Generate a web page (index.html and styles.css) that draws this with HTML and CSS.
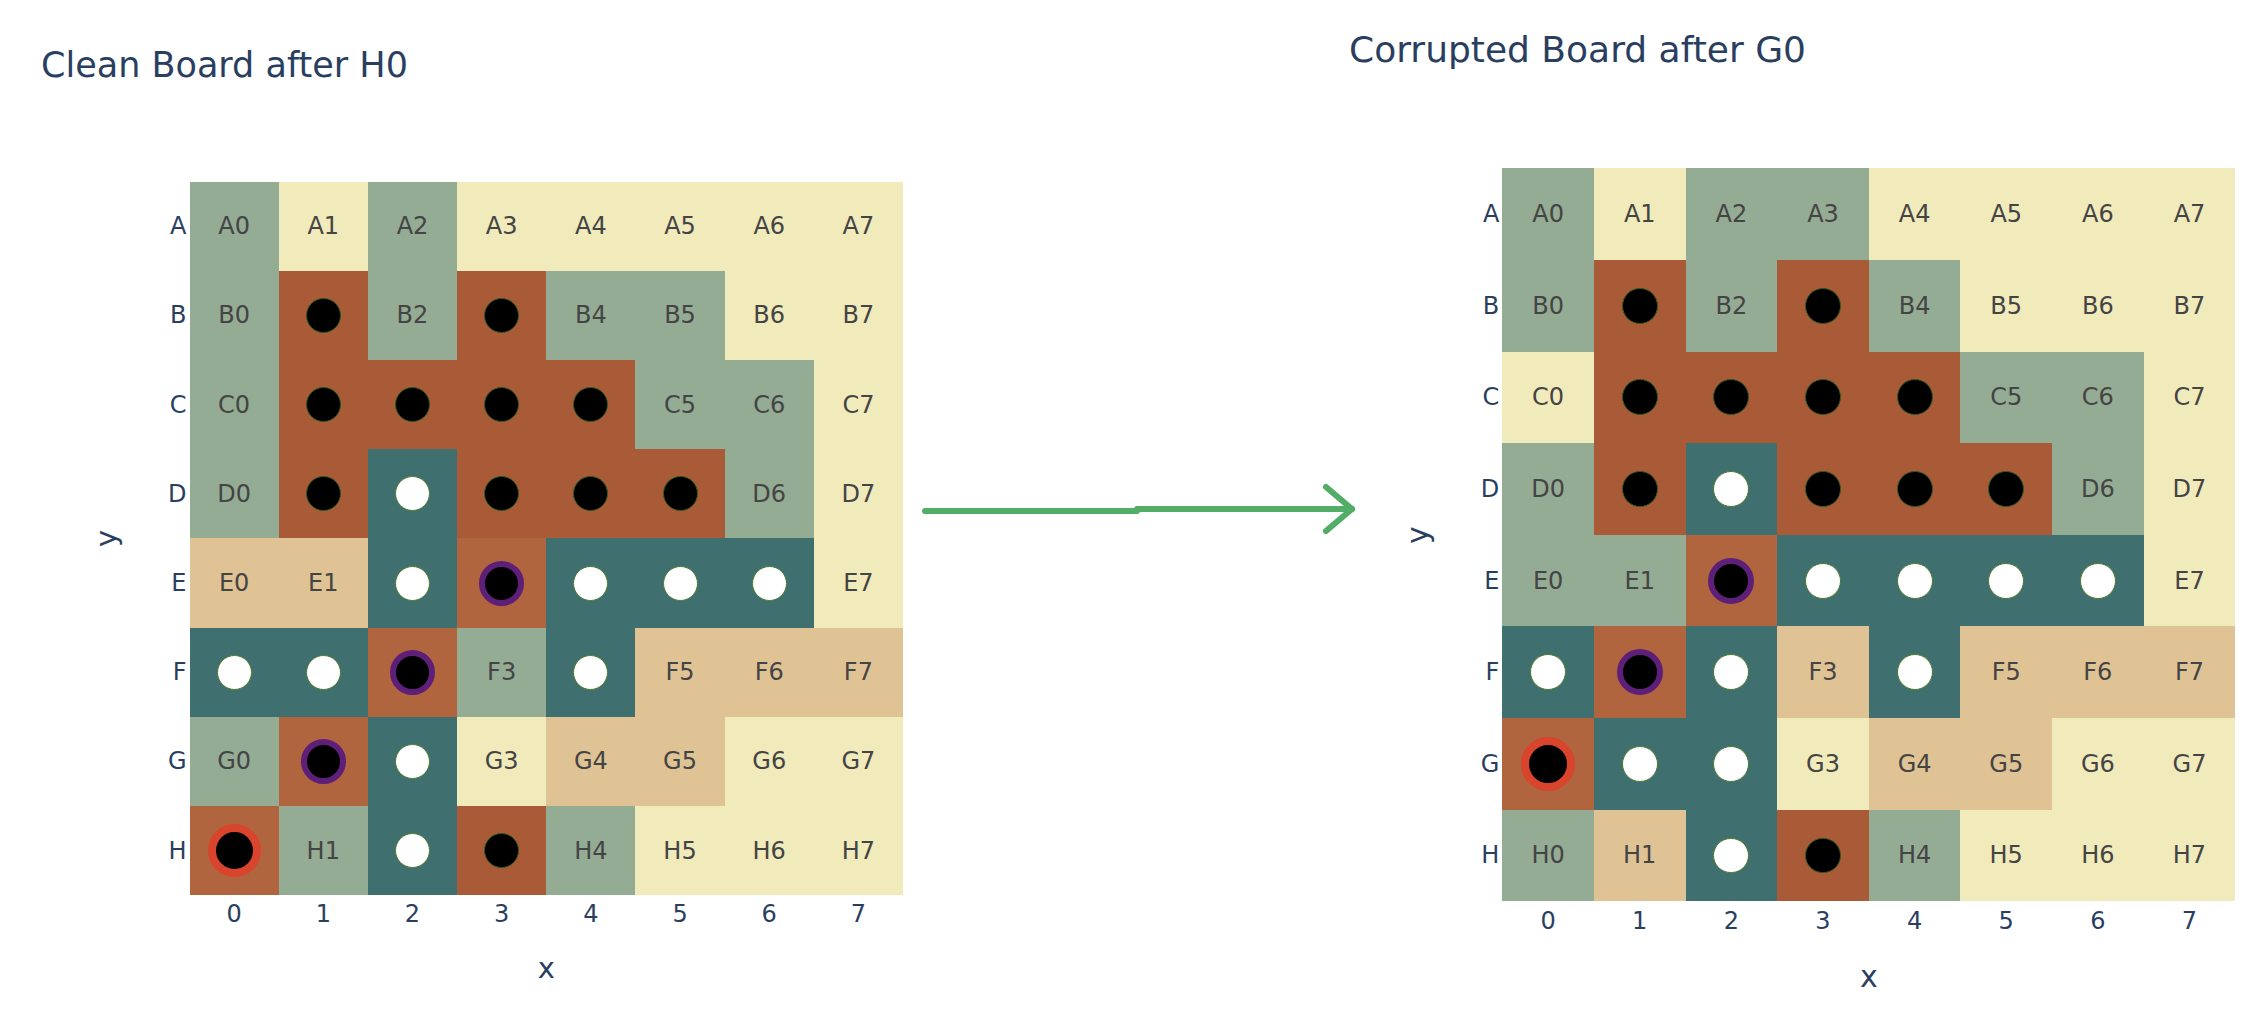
FILE: index.html
```html
<!DOCTYPE html>
<html>
<head>
<meta charset="utf-8">
<link rel="stylesheet" href="styles.css">
</head>
<body>
<div class="page">
  <section class="fig fig-left">
    <h2 class="title">Clean Board after H0</h2>
    <div class="plot">
      <div class="ylab"><span>y</span></div>
      <div class="yticks"><span>A</span><span>B</span><span>C</span><span>D</span><span>E</span><span>F</span><span>G</span><span>H</span></div>
      <div class="board">
        <div class="c s">A0</div><div class="c cr">A1</div><div class="c s">A2</div><div class="c cr">A3</div><div class="c cr">A4</div><div class="c cr">A5</div><div class="c cr">A6</div><div class="c cr">A7</div>
        <div class="c s">B0</div><div class="c r"><i class="dot dk"></i></div><div class="c s">B2</div><div class="c r"><i class="dot dk"></i></div><div class="c s">B4</div><div class="c s">B5</div><div class="c cr">B6</div><div class="c cr">B7</div>
        <div class="c s">C0</div><div class="c r"><i class="dot dk"></i></div><div class="c r"><i class="dot dk"></i></div><div class="c r"><i class="dot dk"></i></div><div class="c r"><i class="dot dk"></i></div><div class="c s">C5</div><div class="c s">C6</div><div class="c cr">C7</div>
        <div class="c s">D0</div><div class="c r"><i class="dot dk"></i></div><div class="c t"><i class="dot wh"></i></div><div class="c r"><i class="dot dk"></i></div><div class="c r"><i class="dot dk"></i></div><div class="c r"><i class="dot dk"></i></div><div class="c s">D6</div><div class="c cr">D7</div>
        <div class="c n">E0</div><div class="c n">E1</div><div class="c t"><i class="dot wh"></i></div><div class="c rl"><i class="dot pu"></i></div><div class="c t"><i class="dot wh"></i></div><div class="c t"><i class="dot wh"></i></div><div class="c t"><i class="dot wh"></i></div><div class="c cr">E7</div>
        <div class="c t"><i class="dot wh"></i></div><div class="c t"><i class="dot wh"></i></div><div class="c rl"><i class="dot pu"></i></div><div class="c s">F3</div><div class="c t"><i class="dot wh"></i></div><div class="c n">F5</div><div class="c n">F6</div><div class="c n">F7</div>
        <div class="c s">G0</div><div class="c rl"><i class="dot pu"></i></div><div class="c t"><i class="dot wh"></i></div><div class="c cr">G3</div><div class="c n">G4</div><div class="c n">G5</div><div class="c cr">G6</div><div class="c cr">G7</div>
        <div class="c rl"><i class="dot rd"></i></div><div class="c s">H1</div><div class="c t"><i class="dot wh"></i></div><div class="c r"><i class="dot dk"></i></div><div class="c s">H4</div><div class="c cr">H5</div><div class="c cr">H6</div><div class="c cr">H7</div>
      </div>
      <div class="xticks"><span>0</span><span>1</span><span>2</span><span>3</span><span>4</span><span>5</span><span>6</span><span>7</span></div>
      <div class="xlab">x</div>
    </div>
  </section>

  <div class="arrow">
    <svg width="440" height="60" viewBox="0 0 440 60">
      <g fill="none" stroke="#52ad67" stroke-width="6" stroke-linecap="round" stroke-linejoin="round">
        <line x1="5" y1="31" x2="217" y2="31"/>
        <line x1="217" y1="29" x2="432" y2="29"/>
        <polyline points="406,7 432,29 406,51"/>
      </g>
    </svg>
  </div>

  <section class="fig fig-right">
    <h2 class="title">Corrupted Board after G0</h2>
    <div class="plot">
      <div class="ylab"><span>y</span></div>
      <div class="yticks"><span>A</span><span>B</span><span>C</span><span>D</span><span>E</span><span>F</span><span>G</span><span>H</span></div>
      <div class="board">
        <div class="c s">A0</div><div class="c cr">A1</div><div class="c s">A2</div><div class="c s">A3</div><div class="c cr">A4</div><div class="c cr">A5</div><div class="c cr">A6</div><div class="c cr">A7</div>
        <div class="c s">B0</div><div class="c r"><i class="dot dk"></i></div><div class="c s">B2</div><div class="c r"><i class="dot dk"></i></div><div class="c s">B4</div><div class="c cr">B5</div><div class="c cr">B6</div><div class="c cr">B7</div>
        <div class="c cr">C0</div><div class="c r"><i class="dot dk"></i></div><div class="c r"><i class="dot dk"></i></div><div class="c r"><i class="dot dk"></i></div><div class="c r"><i class="dot dk"></i></div><div class="c s">C5</div><div class="c s">C6</div><div class="c cr">C7</div>
        <div class="c s">D0</div><div class="c r"><i class="dot dk"></i></div><div class="c t"><i class="dot wh"></i></div><div class="c r"><i class="dot dk"></i></div><div class="c r"><i class="dot dk"></i></div><div class="c r"><i class="dot dk"></i></div><div class="c s">D6</div><div class="c cr">D7</div>
        <div class="c s">E0</div><div class="c s">E1</div><div class="c rl"><i class="dot pu"></i></div><div class="c t"><i class="dot wh"></i></div><div class="c t"><i class="dot wh"></i></div><div class="c t"><i class="dot wh"></i></div><div class="c t"><i class="dot wh"></i></div><div class="c cr">E7</div>
        <div class="c t"><i class="dot wh"></i></div><div class="c rl"><i class="dot pu"></i></div><div class="c t"><i class="dot wh"></i></div><div class="c n">F3</div><div class="c t"><i class="dot wh"></i></div><div class="c n">F5</div><div class="c n">F6</div><div class="c n">F7</div>
        <div class="c rl"><i class="dot rd"></i></div><div class="c t"><i class="dot wh"></i></div><div class="c t"><i class="dot wh"></i></div><div class="c cr">G3</div><div class="c n">G4</div><div class="c n">G5</div><div class="c cr">G6</div><div class="c cr">G7</div>
        <div class="c s">H0</div><div class="c n">H1</div><div class="c t"><i class="dot wh"></i></div><div class="c r"><i class="dot dk"></i></div><div class="c s">H4</div><div class="c cr">H5</div><div class="c cr">H6</div><div class="c cr">H7</div>
      </div>
      <div class="xticks"><span>0</span><span>1</span><span>2</span><span>3</span><span>4</span><span>5</span><span>6</span><span>7</span></div>
      <div class="xlab">x</div>
    </div>
  </section>
</div>
</body>
</html>
```

FILE: styles.css
```css
html, body {
  margin: 0;
  padding: 0;
  background: #ffffff;
}

body {
  width: 2268px;
  height: 1020px;
  overflow: hidden;
  font-family: "DejaVu Sans", Verdana, sans-serif;
}

.page {
  display: flex;
  flex-direction: row;
  align-items: flex-start;
}

.fig {
  flex: none;
  display: flex;
  flex-direction: column;
  --k: 1;
}

.fig-left {
  width: 920px;
  padding-top: 48.4px;
  --cell: 89.2px;
  --ylw: 54px;
  --ytw: 55.5px;
  --plot-top: 98.3px;
  --plot-left: 80px;
  --title-size: 35px;
  --title-left: 41px;
  --xt-pad: 7px;
  --xl-gap: 27.3px;
  --xl-size: 29px;
}

.fig-right {
  width: 928px;
  padding-top: 31.5px;
  --k: 1.027;
  --cell: 91.625px;
  --ylw: 55.3px;
  --ytw: 57px;
  --plot-top: 100.8px;
  --plot-left: 50px;
  --title-size: 36px;
  --title-left: 9px;
  --xt-pad: 7.6px;
  --xl-gap: 28.7px;
  --xl-size: 30px;
}

.title {
  margin: 0;
  padding-left: var(--title-left);
  font-weight: normal;
  font-size: var(--title-size);
  line-height: var(--title-size);
  color: #2a3f5f;
  white-space: nowrap;
}

.plot {
  margin-top: var(--plot-top);
  margin-left: var(--plot-left);
  display: grid;
  grid-template-columns: var(--ylw) var(--ytw) calc(var(--cell) * 8);
  grid-template-rows: calc(var(--cell) * 8) auto auto;
}

.ylab {
  grid-column: 1;
  grid-row: 1;
  display: flex;
  align-items: center;
  justify-content: center;
  color: #2a3f5f;
  font-size: var(--xl-size);
  line-height: var(--xl-size);
}

.ylab span {
  display: block;
  transform: rotate(-90deg);
}

.yticks {
  grid-column: 2;
  grid-row: 1;
  display: grid;
  grid-template-rows: repeat(8, var(--cell));
  color: #2a3f5f;
  font-size: 24px;
  line-height: 24px;
}

.yticks span {
  display: flex;
  align-items: center;
  justify-content: flex-end;
  padding-right: 3px;
}

.board {
  grid-column: 3;
  grid-row: 1;
  display: grid;
  grid-template-columns: repeat(8, var(--cell));
  grid-template-rows: repeat(8, var(--cell));
}

.c {
  display: flex;
  align-items: center;
  justify-content: center;
  font-size: 24px;
  line-height: 24px;
  color: #444444;
}

.s  { background: #94ab94; }
.cr { background: #f1eabb; }
.t  { background: #406f70; }
.n  { background: #e0c394; }
.r  { background: #a95a37; }
.rl { background: #b0653f; }

.dot {
  display: block;
  box-sizing: border-box;
  border-radius: 50%;
  background: #000000;
}

.dk {
  width: calc(35px * var(--k));
  height: calc(35px * var(--k));
  border: 1.5px solid #34591f;
}

.wh {
  width: calc(35px * var(--k));
  height: calc(35px * var(--k));
  background: #ffffff;
  border: 1.5px solid #4d7a2c;
}

.pu {
  width: calc(45px * var(--k));
  height: calc(45px * var(--k));
  border: calc(6px * var(--k)) solid #5e1f78;
}

.rd {
  width: calc(53px * var(--k));
  height: calc(53px * var(--k));
  border: calc(8px * var(--k)) solid #d9442c;
}

.xticks {
  grid-column: 3;
  grid-row: 2;
  display: grid;
  grid-template-columns: repeat(8, var(--cell));
  padding-top: var(--xt-pad);
  color: #2a3f5f;
  font-size: 24px;
  line-height: 24px;
  text-align: center;
}

.xlab {
  grid-column: 3;
  grid-row: 3;
  margin-top: var(--xl-gap);
  text-align: center;
  color: #2a3f5f;
  font-size: var(--xl-size);
  line-height: var(--xl-size);
}

.arrow {
  flex: none;
  width: 420px;
  margin-top: 480px;
}

.arrow svg {
  display: block;
  overflow: visible;
}
```
